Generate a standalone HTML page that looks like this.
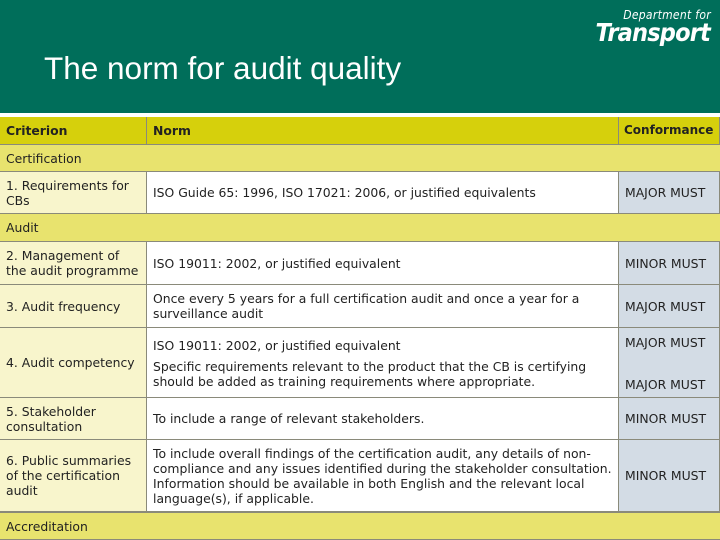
<!DOCTYPE html>
<html><head><meta charset="utf-8"><style>
*{margin:0;padding:0;box-sizing:border-box}
body{width:720px;height:540px;overflow:hidden;background:#fff;position:relative;font-family:"DejaVu Sans","Liberation Sans",sans-serif;font-size:12.4px;color:#222}
#hdr{position:absolute;left:0;top:0;width:720px;height:113px;background:#006e5a}
#title{position:absolute;left:44px;top:50px;color:#fff;font-family:"Liberation Sans",sans-serif;font-size:31.5px}
#dep{position:absolute;right:9px;top:8px;color:#fff;font-style:italic;font-family:"DejaVu Sans Condensed","DejaVu Sans",sans-serif;font-size:12px;letter-spacing:.3px}
#tr{position:absolute;right:10px;top:18px;color:#fff;font-style:italic;font-weight:bold;font-family:"DejaVu Sans Condensed","DejaVu Sans",sans-serif;font-size:25px;letter-spacing:-.8px}
.c{position:absolute;border-right:1px solid #8a8a7a;border-bottom:1px solid #8a8a7a;padding:0 6px;display:flex;align-items:center;line-height:15px}
.h{background:#d6d00c;font-weight:bold}
.s{background:#e8e36e}
.a{background:#f8f5cc}
.b{background:#fff}
.d{background:#d3dce5}
</style></head><body>
<div id="hdr"></div>
<div id="dep">Department for</div>
<div id="tr">Transport</div>
<div id="title">The norm for audit quality</div>

<div class="c h" style="left:0;top:117px;width:147px;height:28px">Criterion</div>
<div class="c h" style="left:147px;top:117px;width:472px;height:28px">Norm</div>
<div class="c h" style="left:619px;top:117px;width:101px;height:28px;padding-left:5px;font-size:12px">Conformance</div>

<div class="c s" style="left:0;top:145px;width:720px;height:27px;border-right:none">Certification</div>

<div class="c a" style="left:0;top:172px;width:147px;height:42px">1. Requirements for CBs</div>
<div class="c b" style="left:147px;top:172px;width:472px;height:42px">ISO Guide 65: 1996, ISO 17021: 2006, or justified equivalents</div>
<div class="c d" style="left:619px;top:172px;width:101px;height:42px">MAJOR MUST</div>

<div class="c s" style="left:0;top:214px;width:720px;height:28px;border-right:none">Audit</div>

<div class="c a" style="left:0;top:242px;width:147px;height:43px">2. Management of the audit programme</div>
<div class="c b" style="left:147px;top:242px;width:472px;height:43px">ISO 19011: 2002, or justified equivalent</div>
<div class="c d" style="left:619px;top:242px;width:101px;height:43px">MINOR MUST</div>

<div class="c a" style="left:0;top:285px;width:147px;height:43px">3. Audit frequency</div>
<div class="c b" style="left:147px;top:285px;width:472px;height:43px">Once every 5 years for a full certification audit and once a year for a surveillance audit</div>
<div class="c d" style="left:619px;top:285px;width:101px;height:43px">MAJOR MUST</div>

<div class="c a" style="left:0;top:328px;width:147px;height:70px">4. Audit competency</div>
<div class="c b" style="left:147px;top:328px;width:472px;height:70px;display:block;padding-top:10px">ISO 19011: 2002, or justified equivalent<div style="margin-top:6px">Specific requirements relevant to the product that the CB is certifying should be added as training requirements where appropriate.</div></div>
<div class="c d" style="left:619px;top:328px;width:101px;height:70px;display:block;padding-top:7px">MAJOR MUST<div style="margin-top:27px">MAJOR MUST</div></div>

<div class="c a" style="left:0;top:398px;width:147px;height:42px">5. Stakeholder consultation</div>
<div class="c b" style="left:147px;top:398px;width:472px;height:42px">To include a range of relevant stakeholders.</div>
<div class="c d" style="left:619px;top:398px;width:101px;height:42px">MINOR MUST</div>

<div class="c a" style="left:0;top:440px;width:147px;height:72px">6. Public summaries of the certification audit</div>
<div class="c b" style="left:147px;top:440px;width:472px;height:72px">To include overall findings of the certification audit, any details of non-compliance and any issues identified during the stakeholder consultation. Information should be available in both English and the relevant local language(s), if applicable.</div>
<div class="c d" style="left:619px;top:440px;width:101px;height:72px">MINOR MUST</div>

<div class="c s" style="left:0;top:512px;width:720px;height:28px;border-right:none;border-top:1px solid #8a8a7a">Accreditation</div>
</body></html>
